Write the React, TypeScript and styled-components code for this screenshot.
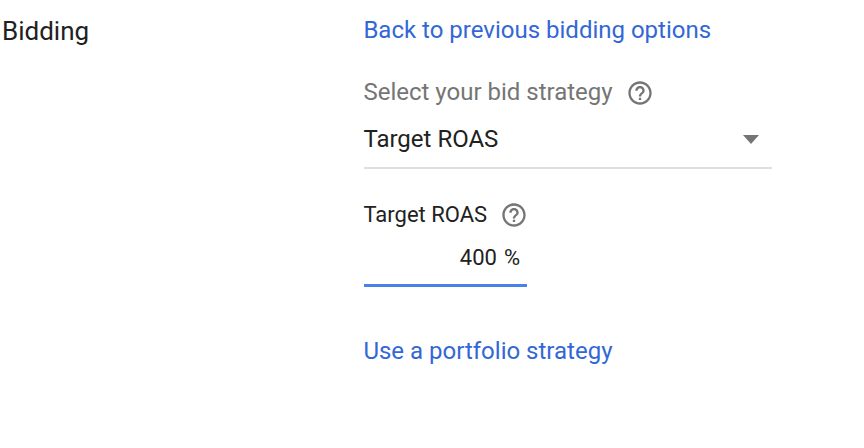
import React from 'react';
import styled, { createGlobalStyle } from 'styled-components';

const GlobalStyle = createGlobalStyle`
  body { margin: 0; background: #fff; font-family: Roboto, sans-serif; color: #212121; }
`;

const Section = styled.section`
  display: grid;
  grid-template-columns: 362px 410px;
  height: 448px;
  box-sizing: border-box;
  padding-left: 2px;
`;
const Title = styled.h2`
  margin: 16px 0 0;
  font-size: 26px;
  line-height: 30px;
  font-weight: 400;
`;
const Options = styled.div`
  display: flex;
  flex-direction: column;
  align-items: flex-start;
  width: 408px;
`;
const TextLink = styled.a<{ $top: number }>`
  margin: ${(p) => p.$top}px 0 0 -0.6px;
  font-size: 24px;
  line-height: 30px;
  color: #3367d6;
  text-decoration: none;
  white-space: nowrap;
`;
const Label = styled.div<{ $muted?: boolean }>`
  display: flex;
  align-items: center;
  gap: ${(p) => (p.$muted ? 13.6 : 13)}px;
  height: 30px;
  margin: ${(p) => (p.$muted ? 32 : 30)}px 0 0 -0.6px;
  font-size: ${(p) => (p.$muted ? 24 : 22)}px;
  color: ${(p) => (p.$muted ? '#757575' : '#212121')};
  white-space: nowrap;
`;
const Dropdown = styled.div`
  display: flex;
  align-items: center;
  justify-content: space-between;
  box-sizing: border-box;
  width: 408px;
  height: 62px;
  padding: 4px 13px 0 0;
  border-bottom: 2px solid #dfdfe3;
  font-size: 24px;
`;
const DropdownValue = styled.span`
  margin-left: -0.6px;
`;
const Caret = styled.svg`
  width: 16px;
  height: 9px;
  fill: #757575;
`;
const PercentField = styled.div`
  display: flex;
  align-items: center;
  justify-content: flex-end;
  gap: 7px;
  box-sizing: border-box;
  width: 163px;
  height: 58px;
  padding: 1px 7px 0 0;
  border-bottom: 3px solid #4881e8;
  font-size: 22px;
`;
const HelpSvg = styled.svg`
  width: 28px;
  height: 28px;
  margin-top: 2px;
  fill: #757575;
`;

const HelpIcon = () => (
  <HelpSvg viewBox="0 0 24 24" aria-label="Help">
    <path d="M11 18h2v-2h-2v2zm1-16C6.48 2 2 6.48 2 12s4.48 10 10 10 10-4.48 10-10S17.52 2 12 2zm0 18c-4.41 0-8-3.59-8-8s3.59-8 8-8 8 3.59 8 8-3.59 8-8 8zm0-14c-2.21 0-4 1.79-4 4h2c0-1.1.9-2 2-2s2 .9 2 2c0 2-3 1.75-3 5h2c0-2.25 3-2.5 3-5 0-2.21-1.79-4-4-4z" />
  </HelpSvg>
);

export default function App() {
  return (
    <>
      <GlobalStyle />
      <Section>
        <Title>Bidding</Title>
        <Options>
          <TextLink $top={15}>Back to previous bidding options</TextLink>
          <Label $muted><span>Select your bid strategy</span><HelpIcon /></Label>
          <Dropdown>
            <DropdownValue>Target ROAS</DropdownValue>
            <Caret viewBox="0 0 18 9" preserveAspectRatio="none"><path d="M0 0h18l-9 9z" /></Caret>
          </Dropdown>
          <Label><span>Target ROAS</span><HelpIcon /></Label>
          <PercentField><span>400</span><span>%</span></PercentField>
          <TextLink $top={49}>Use a portfolio strategy</TextLink>
        </Options>
      </Section>
    </>
  );
}
